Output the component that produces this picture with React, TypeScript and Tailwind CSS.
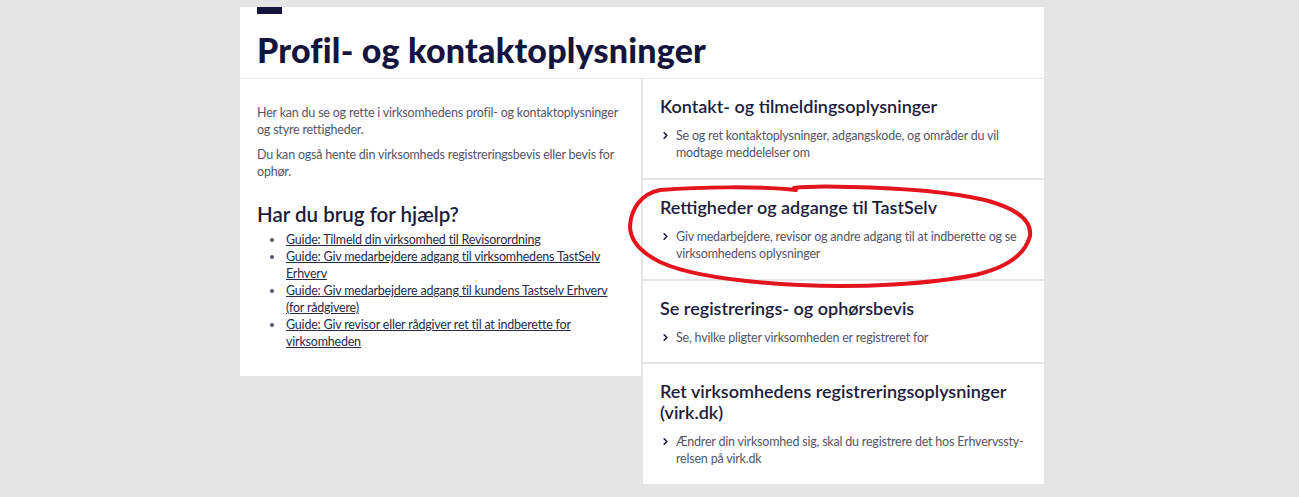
import { ChevronRight } from 'lucide-react'

const guides = [
  'Guide: Tilmeld din virksomhed til Revisorordning',
  'Guide: Giv medarbejdere adgang til virksomhedens TastSelv Erhverv',
  'Guide: Giv medarbejdere adgang til kundens Tastselv Erhverv (for rådgivere)',
  'Guide: Giv revisor eller rådgiver ret til at indberette for virksomheden',
]

const cards = [
  {
    title: 'Kontakt- og tilmeldingsoplysninger',
    text: 'Se og ret kontaktoplysninger, adgangskode, og områder du vil modtage meddelelser om',
    h: 'h-[99px]',
  },
  {
    title: 'Rettigheder og adgange til TastSelv',
    text: 'Giv medarbejdere, revisor og andre adgang til at indberette og se virksomhedens oplysninger',
    h: 'h-[99px]',
  },
  {
    title: 'Se registrerings- og ophørsbevis',
    text: 'Se, hvilke pligter virksomheden er registreret for',
    h: 'h-[81px]',
  },
  {
    title: 'Ret virksomhedens registreringsoplysninger (virk.dk)',
    text: 'Ændrer din virksomhed sig, skal du registrere det hos Erhvervssty-relsen på virk.dk',
    h: 'h-[120px]',
  },
]

export default function App() {
  return (
    <div className="relative w-full h-[497px] bg-[#e5e5e5] overflow-hidden font-['Lato',sans-serif]">
      <div className="ml-[240px] mt-[7px] w-[804px]">
        <div className="h-[72px] bg-white border-b border-[#e8e8e8] px-[17px]">
          <div className="w-[25px] h-[7px] bg-[#14143c]"></div>
          <h1 className="mt-[16px] text-[34px] leading-[40px] font-black text-[#14143c] tracking-[0.2px]">
            Profil- og kontaktoplysninger
          </h1>
        </div>

        <div className="flex gap-[2px] items-start">
          <div className="w-[401px] h-[297px] bg-white px-[17px] pt-[25px] text-[12.5px] leading-[17px] tracking-[-0.2px] text-[#555568]">
            <p>Her kan du se og rette i virksomhedens profil- og kontaktoplysninger og styre rettigheder.</p>
            <p className="mt-[8px]">Du kan også hente din virksomheds registreringsbevis eller bevis for ophør.</p>
            <h2 className="mt-[22px] text-[20.5px] leading-[24px] tracking-normal font-semibold text-[#1c1c3c]">Har du brug for hjælp?</h2>
            <ul className="mt-[5px] pl-[28px] list-disc marker:text-[#555568]">
              {guides.map(g => (
                <li key={g} className="pl-[1px]">
                  <a href="#" className="underline text-[#2a2a48]">{g}</a>
                </li>
              ))}
            </ul>
          </div>

          <div className="w-[401px] flex flex-col gap-[2px]">
            {cards.map(c => (
              <div key={c.title} className={`${c.h} bg-white px-[17px] pt-[17px]`}>
                <h3 className="text-[18px] leading-[21px] font-semibold text-[#1c1c3c]">{c.title}</h3>
                <div className="mt-[10px] flex text-[12.5px] leading-[17px] tracking-[-0.2px] text-[#555568]">
                  <ChevronRight className="w-[11px] h-[11px] mt-[3px] mr-[5px] shrink-0 text-[#1c1c3c]" strokeWidth={3.5} />
                  <span>{c.text}</span>
                </div>
              </div>
            ))}
          </div>
        </div>
      </div>

      <svg className="absolute left-0 top-0 pointer-events-none" width="1299" height="497" viewBox="0 0 1299 497">
        <path
          d="M796 190 C 760 186, 700 187, 660 190 C 640 194, 631 210, 630 226 C 630 240, 640 252, 660 262 C 690 276, 740 282, 800 285 C 860 288, 930 284, 975 275 C 1005 268, 1025 255, 1030 236 C 1032 220, 1015 208, 985 200 C 950 192, 900 188, 850 187 C 825 186, 810 186, 794 188"
          fill="none"
          stroke="#e3141c"
          strokeWidth="4"
          strokeLinecap="round"
        />
      </svg>
    </div>
  )
}
